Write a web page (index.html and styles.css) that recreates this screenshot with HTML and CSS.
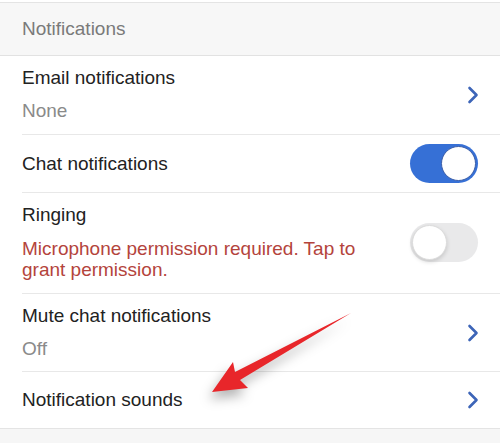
FILE: index.html
```html
<!DOCTYPE html>
<html>
<head>
<meta charset="utf-8">
<link rel="stylesheet" href="styles.css">
</head>
<body>
<div class="screen">
  <div class="section-header">Notifications</div>
  <div class="list">
    <div class="row row-email">
      <div class="texts">
        <div class="title">Email notifications</div>
        <div class="sub">None</div>
      </div>
      <svg class="chev" width="12" height="18" viewBox="0 0 12 18"><polyline points="2.5,2 9.5,9 2.5,16" fill="none" stroke="#3d65b8" stroke-width="2.6" stroke-linecap="round" stroke-linejoin="round"/></svg>
    </div>
    <div class="row row-toggle">
      <div class="texts">
        <div class="title">Chat notifications</div>
      </div>
      <div class="toggle on"><div class="knob"></div></div>
    </div>
    <div class="row row-ring">
      <div class="texts">
        <div class="title">Ringing</div>
        <div class="warn">Microphone permission required. Tap to grant permission.</div>
      </div>
      <div class="toggle off"><div class="knob"></div></div>
    </div>
    <div class="row row-mute">
      <div class="texts">
        <div class="title">Mute chat notifications</div>
        <div class="sub">Off</div>
      </div>
      <svg class="chev" width="12" height="18" viewBox="0 0 12 18"><polyline points="2.5,2 9.5,9 2.5,16" fill="none" stroke="#3d65b8" stroke-width="2.6" stroke-linecap="round" stroke-linejoin="round"/></svg>
    </div>
    <div class="row row-one last">
      <div class="texts">
        <div class="title">Notification sounds</div>
      </div>
      <svg class="chev" width="12" height="18" viewBox="0 0 12 18"><polyline points="2.5,2 9.5,9 2.5,16" fill="none" stroke="#3d65b8" stroke-width="2.6" stroke-linecap="round" stroke-linejoin="round"/></svg>
    </div>
  </div>
  <svg class="arrow" width="500" height="443" viewBox="0 0 500 443">
    <polygon points="212,392 233,362 235,372 351,313 240,380 248,388" fill="#e8262a"/>
  </svg>
</div>
</body>
</html>
```

FILE: styles.css
```css
html, body {
  margin: 0;
  padding: 0;
}
body {
  background: #f6f6f6;
  font-family: "Liberation Sans", Arial, sans-serif;
  width: 500px;
  height: 443px;
  overflow: hidden;
}
.screen {
  position: relative;
  width: 500px;
  height: 443px;
  padding-top: 2px;
  box-sizing: border-box;
  background: linear-gradient(#fff 0, #fff 2px, #f6f6f6 2px);
}
.section-header {
  background: #f7f7f7;
  border-top: 1px solid #e4e4e4;
  border-bottom: 1px solid #e2e2e2;
  height: 54px;
  box-sizing: border-box;
  padding: 0 22px;
  display: flex;
  align-items: center;
  font-size: 19px;
  color: #7a7a7a;
}
.list {
  background: #fff;
  border-bottom: 1px solid #e4e4e4;
}
.row {
  display: flex;
  align-items: center;
  padding: 0 22px;
  position: relative;
}
.row::after {
  content: "";
  position: absolute;
  left: 22px;
  right: 0;
  bottom: 0;
  height: 1px;
  background: #e8e8e8;
}
.row.last::after {
  display: none;
}
.texts {
  flex: 1;
  min-width: 0;
  display: flex;
  flex-direction: column;
}
.title {
  font-size: 19px;
  line-height: 22px;
  color: #222;
}
.sub {
  font-size: 19px;
  line-height: 22px;
  color: #8a8a8a;
  margin-top: 11px;
}
.row-email {
  padding-top: 11px;
  padding-bottom: 13px;
}
.row-mute {
  padding-top: 11px;
  padding-bottom: 12px;
}
.row-toggle {
  padding-top: 9px;
  padding-bottom: 10px;
}
.row-ring {
  padding-top: 11px;
  padding-bottom: 14px;
}
.row-one {
  padding-top: 17px;
  padding-bottom: 17px;
}
.warn {
  font-size: 19px;
  line-height: 21px;
  color: #b4443c;
  margin-top: 12px;
  margin-right: 28px;
}
.chev {
  display: block;
  flex: none;
  margin-right: -1px;
}
.toggle {
  flex: none;
  width: 68px;
  height: 39px;
  border-radius: 20px;
  position: relative;
  box-sizing: border-box;
}
.toggle.on {
  background: #3670d6;
}
.toggle.off {
  background: #e9e9ea;
}
.knob {
  position: absolute;
  top: 2px;
  width: 35px;
  height: 35px;
  border-radius: 50%;
  background: #fff;
  box-sizing: border-box;
}
.toggle.on .knob {
  right: 2px;
  border: 1.5px solid #3b5ea8;
}
.toggle.off .knob {
  left: 2px;
  border: 1px solid #dcdcdc;
  box-shadow: 0 2px 4px rgba(0,0,0,0.15);
}
.arrow {
  position: absolute;
  left: 0;
  top: 0;
  pointer-events: none;
  filter: drop-shadow(-3px 7px 6px rgba(0,0,0,0.3));
}
```
